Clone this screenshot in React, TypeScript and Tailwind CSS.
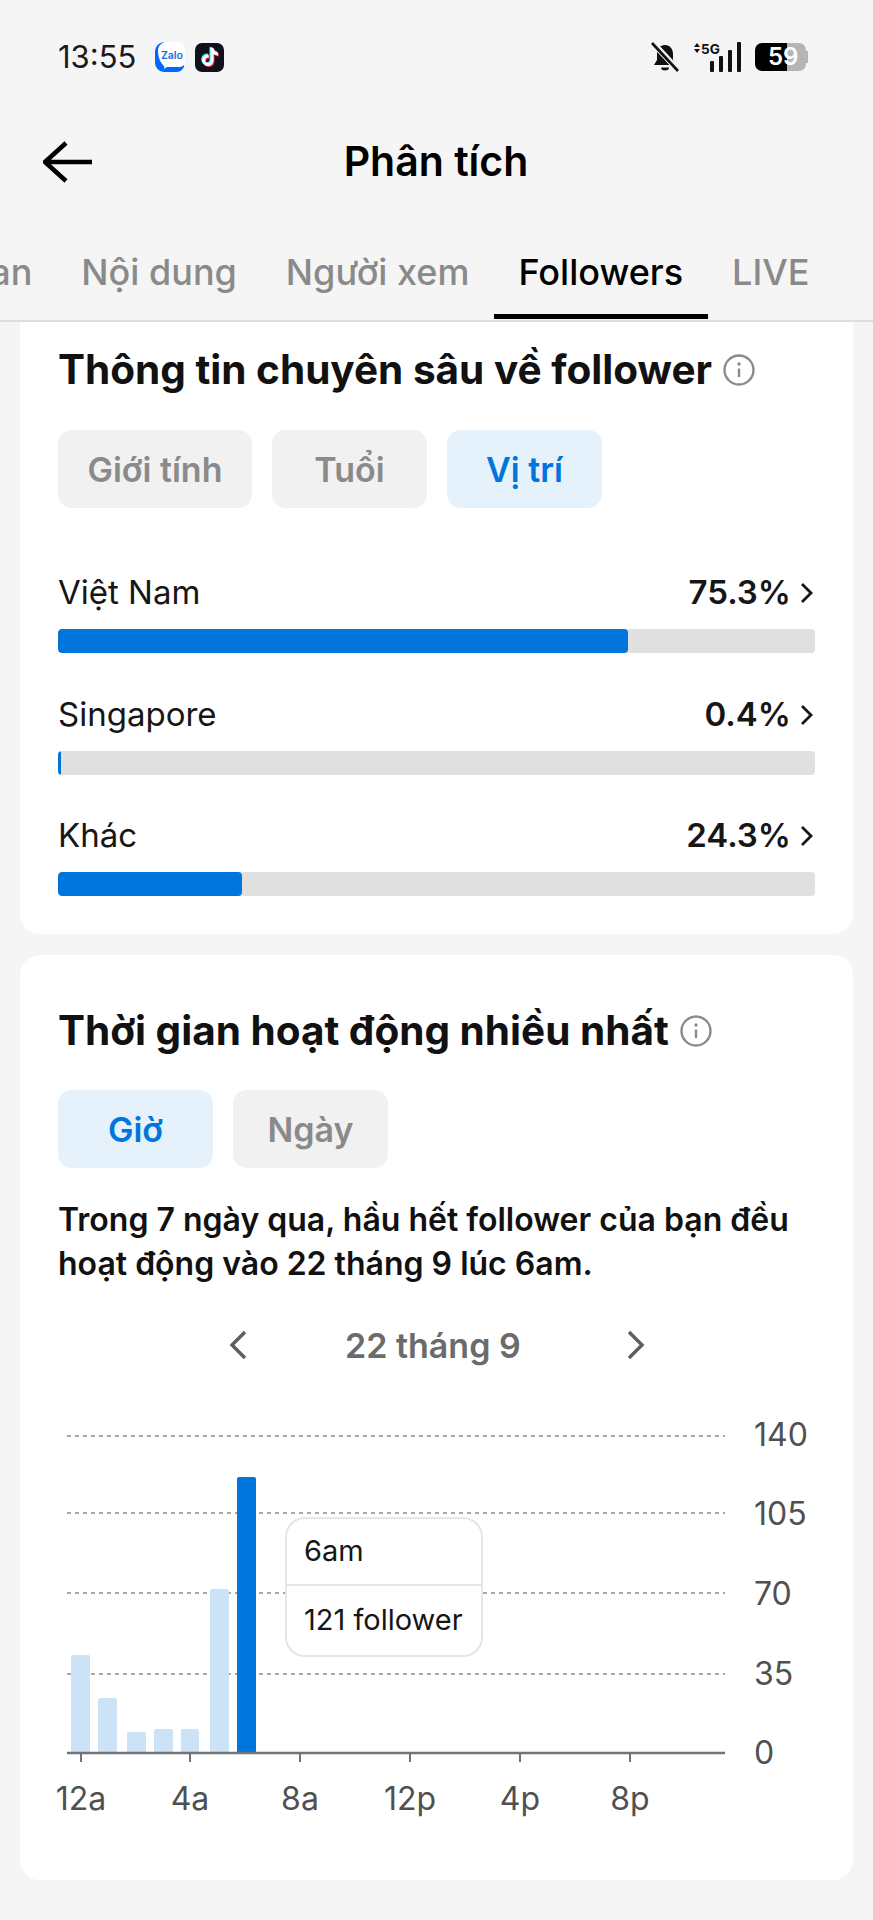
import { FaTiktok } from "react-icons/fa";

const FONT = "[font-family:Inter,'Noto_Sans',sans-serif]";

const tabs = ["Tổng quan", "Nội dung", "Người xem", "Followers", "LIVE"];

const locations = [
  { name: "Việt Nam", value: "75.3%", width: 75.3 },
  { name: "Singapore", value: "0.4%", width: 0.4 },
  { name: "Khác", value: "24.3%", width: 24.3 },
];

// x, top y of every bar, in chart coordinates
const bars = [
  { x: 13, w: 19, top: 243 },
  { x: 40, w: 19, top: 286 },
  { x: 69, w: 19, top: 320 },
  { x: 96, w: 19, top: 317 },
  { x: 123, w: 18, top: 317 },
  { x: 152, w: 19, top: 177 },
  { x: 179, w: 19, top: 65, active: true },
];

const gridLines = [
  { y: 24, label: "140", labelY: 34 },
  { y: 101, label: "105", labelY: 113 },
  { y: 181, label: "70", labelY: 193 },
  { y: 262, label: "35", labelY: 273 },
];

const xTicks = [
  { x: 23, label: "12a" },
  { x: 132, label: "4a" },
  { x: 242, label: "8a" },
  { x: 352, label: "12p" },
  { x: 462, label: "4p" },
  { x: 572, label: "8p" },
];

function Chip({ label, active, width }: { label: string; active?: boolean; width: string }) {
  return (
    <div
      className={`h-[78px] ${width} rounded-[14px] flex items-center justify-center text-[34px] font-semibold ${
        active ? "bg-[#e5f2fc] text-[#0075db]" : "bg-[#f1f1f1] text-[#8a8a8a]"
      }`}
    >
      {label}
    </div>
  );
}

function InfoIcon() {
  return (
    <svg width="32" height="32" viewBox="0 0 32 32" fill="none" className="shrink-0">
      <circle cx="16" cy="16" r="14.5" stroke="#8a8a8a" strokeWidth="2.4" />
      <circle cx="16" cy="10" r="1.7" fill="#8a8a8a" />
      <path d="M16 14.5V23" stroke="#8a8a8a" strokeWidth="2.4" />
    </svg>
  );
}

function StatusBar() {
  return (
    <div className="h-[114px] pl-[58px] pr-[65px] flex items-center justify-between">
      <div className="flex items-center">
        <span className="text-[31px] text-[#1a1a1a] w-[97px]">13:55</span>
        {/* Zalo */}
        <svg width="30" height="30" viewBox="0 0 30 30" className="mr-[10px]">
          <path d="M9 0C3 1 0 5 0 10V21a9 9 0 0 0 9 9H21a9 9 0 0 0 8-5V10H9z" fill="#0068ff" />
          <path
            d="M10 0H22a8 8 0 0 1 8 8V20a5 5 0 0 1-5 5H12l-3 2c1-2 0-3-2-5C4 18 3 13 3 9 3 4 6 1 10 0z"
            fill="#fff"
          />
          <text x="17" y="16.5" textAnchor="middle" fontSize="10.5" fill="#1a6fd8" fontWeight="600">
            Zalo
          </text>
        </svg>
        {/* TikTok */}
        <div className="w-[29px] h-[29px] rounded-[7px] bg-[#11111b] relative flex items-center justify-center">
          <FaTiktok className="absolute text-[#25f4ee] text-[18px] -translate-x-[1px] -translate-y-[1px]" />
          <FaTiktok className="absolute text-[#fe2c55] text-[18px] translate-x-[1px] translate-y-[1px]" />
          <FaTiktok className="absolute text-white text-[18px]" />
        </div>
      </div>
      <div className="flex items-center">
        {/* muted bell */}
        <svg width="30" height="30" viewBox="0 0 30 30" className="mr-[11px]">
          <path d="M15 3c-5 0-8 4-8 9v6l-3 5h22l-3-5v-6c0-5-3-9-8-9z" fill="#111" />
          <path d="M11 25.5h8a4 3 0 0 1-8 0z" fill="#111" />
          <path d="M2 0L29 29" stroke="#f5f5f5" strokeWidth="6" />
          <path d="M2 1L28 29" stroke="#111" strokeWidth="2.6" />
        </svg>
        {/* signal */}
        <svg width="52" height="30" viewBox="0 0 52 30" className="mr-[12px]">
          <path d="M3 5L6 1L9 5z M3 7L6 11L9 7z" fill="#111" />
          <text x="10" y="12" fontSize="13.5" fontWeight="700" fill="#111">
            5G
          </text>
          <rect x="19" y="19" width="4" height="11" rx="1" fill="#111" />
          <rect x="28" y="14" width="4" height="16" rx="1" fill="#111" />
          <rect x="37" y="8" width="4" height="22" rx="1" fill="#111" />
          <rect x="46" y="0" width="4" height="30" rx="1" fill="#111" />
        </svg>
        {/* battery */}
        <div className="relative w-[53px] h-[28px] flex">
          <div className="w-[32px] h-full bg-black rounded-l-[7px]" />
          <div className="w-[19px] h-full bg-[#b5b5b5] rounded-r-[7px]" />
          <div className="w-[2px] h-[12px] self-center bg-[#b5b5b5]" />
          <span className="absolute left-[13px] top-0 h-full flex items-center text-[24px] font-semibold text-white">
            59
          </span>
        </div>
      </div>
    </div>
  );
}

function Header() {
  return (
    <div className="h-[96px] pl-[43px] flex items-center relative">
      <svg width="50" height="42" viewBox="0 0 50 42" fill="none">
        <path d="M49 21H2M23 2L2 21L23 40" stroke="#000" strokeWidth="4.5" strokeLinejoin="round" />
      </svg>
      <h1 className="absolute inset-x-0 text-center text-[41px] font-semibold text-black pr-[1px]">Phân tích</h1>
    </div>
  );
}

function Tabs() {
  return (
    <div className="h-[112px] border-b-2 border-[#dddddd] flex justify-end pr-[39px] overflow-hidden">
      {tabs.map((tab) => (
        <div
          key={tab}
          className={`shrink-0 px-[24.5px] mb-[1px] pt-[20px] flex items-center text-[36px] font-medium border-b-[5px] ${
            tab === "Followers" ? "border-black text-black" : "border-transparent text-[#8a8a8a]"
          } ${tab === "LIVE" ? "text-[35px]" : ""}`}
        >
          {tab}
        </div>
      ))}
    </div>
  );
}

function LocationRow({ name, value, width }: { name: string; value: string; width: number }) {
  return (
    <div>
      <div className="h-[44px] flex items-center justify-between">
        <span className="text-[33px] text-[#161616]">{name}</span>
        <div className="flex items-center">
          <span className="text-[33px] font-semibold text-[#161616]">{value}</span>
          <svg width="14" height="22" viewBox="0 0 14 22" fill="none" className="ml-[9px] mr-[1px]">
            <path d="M2 2L11 11L2 20" stroke="#161616" strokeWidth="2.8" />
          </svg>
        </div>
      </div>
      <div className="mt-[14px] h-[24px] rounded-[4px] bg-[#e0e0e0] overflow-hidden">
        <div className="h-full rounded-[4px] bg-[#0075db]" style={{ width: `${width}%` }} />
      </div>
    </div>
  );
}

function FollowerInsights() {
  return (
    <section className="mx-[20px] bg-white rounded-b-[20px] px-[38px] pt-[24px] pb-[38px]">
      <div className="h-[48px] flex items-center gap-[11px]">
        <h2 className="text-[40.5px] font-bold text-[#111]">Thông tin chuyên sâu về follower</h2>
        <InfoIcon />
      </div>
      <div className="mt-[36px] flex gap-[20px]">
        <Chip label="Giới tính" width="w-[194px]" />
        <Chip label="Tuổi" width="w-[155px]" />
        <Chip label="Vị trí" width="w-[155px]" active />
      </div>
      <div className="mt-[63px] flex flex-col gap-[39.5px]">
        {locations.map((location) => (
          <LocationRow key={location.name} {...location} />
        ))}
      </div>
    </section>
  );
}

function ActivityChart() {
  return (
    <div className="relative mt-[37px] h-[418px]">
      <svg width="757" height="418" viewBox="0 0 757 418" fill="none" className="overflow-visible">
        {gridLines.map((line) => (
          <path key={line.y} d={`M9 ${line.y}H667`} stroke="#a8a8a8" strokeWidth="2" strokeDasharray="4 4" />
        ))}
        {bars.map((bar) => (
          <path
            key={bar.x}
            d={`M${bar.x} 340V${bar.top + 2}a2 2 0 0 1 2 -2H${bar.x + bar.w - 2}a2 2 0 0 1 2 2V340z`}
            fill={bar.active ? "#0075db" : "#cce2f7"}
          />
        ))}
        <path d="M9 341H667" stroke="#70747a" strokeWidth="2.5" />
        {xTicks.map((tick) => (
          <path key={tick.x} d={`M${tick.x} 341V350`} stroke="#70747a" strokeWidth="2" />
        ))}
        {[...gridLines, { y: 341, label: "0", labelY: 352 }].map((line) => (
          <text key={line.label} x="696" y={line.labelY} fontSize="32" fill="#505050">
            {line.label}
          </text>
        ))}
        {xTicks.map((tick) => (
          <text key={tick.label} x={tick.x} y="398" fontSize="32" fill="#505050" textAnchor="middle">
            {tick.label}
          </text>
        ))}
      </svg>
      {/* tooltip */}
      <div className="absolute left-[227px] top-[105px] w-[198px] h-[140px] rounded-[20px] bg-white border-2 border-[#e6e6e6] text-[29px] text-[#161616]">
        <div className="h-[67px] pl-[17px] pb-[2px] flex items-center border-b-2 border-[#e6e6e6]">6am</div>
        <div className="h-[69px] pl-[17px] pb-[2px] flex items-center">121 follower</div>
      </div>
    </div>
  );
}

function ActiveTimes() {
  return (
    <section className="mx-[20px] mt-[21px] h-[925px] bg-white rounded-[20px] px-[38px] pt-[52px]">
      <div className="h-[48px] flex items-center gap-[11px]">
        <h2 className="text-[40.5px] font-bold text-[#111]">Thời gian hoạt động nhiều nhất</h2>
        <InfoIcon />
      </div>
      <div className="mt-[35px] flex gap-[20px]">
        <Chip label="Giờ" width="w-[155px]" active />
        <Chip label="Ngày" width="w-[155px]" />
      </div>
      <p className="mt-[30px] text-[32px] leading-[44px] font-semibold text-[#111]">
        Trong 7 ngày qua, hầu hết follower của bạn đều hoạt động vào 22 tháng 9 lúc 6am.
      </p>
      <div className="mt-[29px] h-[60px] pl-[169px] flex items-center">
        <svg width="22" height="32" viewBox="0 0 22 32" fill="none">
          <path d="M18 3L5 16L18 29" stroke="#5e5e5e" strokeWidth="3.4" />
        </svg>
        <span className="ml-[96px] w-[280px] text-[34px] font-semibold text-[#6b6b6b]">22 tháng 9</span>
        <svg width="22" height="32" viewBox="0 0 22 32" fill="none">
          <path d="M4 3L17 16L4 29" stroke="#5e5e5e" strokeWidth="3.4" />
        </svg>
      </div>
      <ActivityChart />
    </section>
  );
}

export default function App() {
  return (
    <div className={`w-[873px] h-[1920px] bg-[#f5f5f5] overflow-hidden ${FONT}`}>
      <StatusBar />
      <Header />
      <Tabs />
      <FollowerInsights />
      <ActiveTimes />
    </div>
  );
}
